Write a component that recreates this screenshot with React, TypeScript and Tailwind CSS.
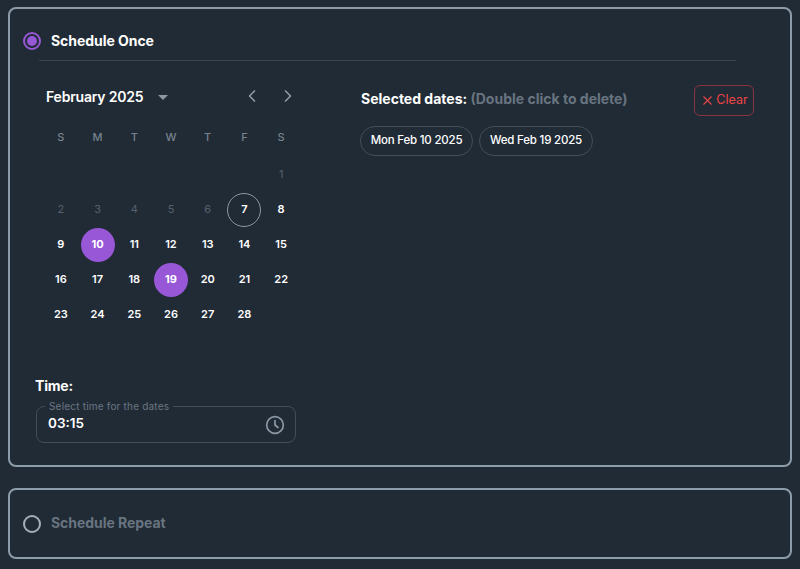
import { ChevronLeft, ChevronRight, X } from "lucide-react";

const weekDays = ["S", "M", "T", "W", "T", "F", "S"];
const leading = [null, null, null, null, null, null, 1, 2, 3, 4, 5, 6];
const current = Array.from({ length: 22 }, (_, i) => i + 7);
const selected = [10, 19];

function Day({ d }: { d: number | null }) {
  if (d === null) return <div className="h-[35px]" />;
  const isMuted = d < 7;
  const isSel = selected.includes(d);
  return (
    <div className="h-[35px] flex items-center justify-center">
      <div
        className={
          "w-[34px] h-[34px] rounded-full flex items-center justify-center " +
          (isMuted
            ? "text-[11px] font-normal text-[#56616d]"
            : isSel
              ? "text-[11px] font-bold text-white bg-[#9757d7]"
              : d === 7
                ? "text-[11px] font-semibold text-white border border-[#8b98a5]"
                : "text-[11px] font-semibold text-white")
        }
      >
        {d}
      </div>
    </div>
  );
}

export default function App() {
  return (
    <div
      className="w-[800px] h-[569px] overflow-hidden bg-[#212b36] pl-2 pr-[8px] pt-[7px] flex flex-col gap-[21px]"
      style={{ fontFamily: '"Inter", "Liberation Sans", sans-serif' }}
    >
      <section className="h-[460px] shrink-0 border-2 border-[#8d9ca9] rounded-lg pl-[13px] flex flex-col">
        <div className="h-[51px] flex items-end shrink-0">
          <div className="flex items-center h-[35px] pb-[3px]">
            <div className="w-[18px] h-[18px] rounded-full border-2 border-[#9757d7] flex items-center justify-center">
              <div className="w-[10px] h-[10px] rounded-full bg-[#9757d7]" />
            </div>
            <span className="ml-[10px] -mt-[2px] text-[14px] font-bold text-white tracking-[-0.05px]">Schedule Once</span>
          </div>
        </div>
        <div className="h-px ml-[16px] w-[697px] bg-[#3a4550] shrink-0" />
        <div className="flex">
          <div className="ml-[13px] w-[267px] shrink-0 flex flex-col">
            <div className="h-[36px] mt-[17px] flex items-center pl-[10px] pr-[5px]">
              <span className="text-[14px] font-semibold text-white tracking-[-0.2px]">February 2025</span>
              <svg className="ml-[15px] mt-[2px]" width="10" height="5" viewBox="0 0 10 5">
                <path d="M0 0h10L5 5z" fill="#8b98a5" />
              </svg>
              <div className="ml-auto flex items-center gap-[16px] text-[#8b98a5]">
                <ChevronLeft size={20} strokeWidth={2} />
                <ChevronRight size={20} strokeWidth={2} />
              </div>
            </div>
            <div className="grid grid-cols-7 w-[257px] ml-[6.5px] mt-[6px] h-[35px] items-center text-center text-[11px] font-medium text-[#76828e] leading-none">
              {weekDays.map((d, i) => (
                <span key={i}>{d}</span>
              ))}
            </div>
            <div className="grid grid-cols-7 w-[257px] ml-[6.5px] mt-[2px]">
              {leading.map((d, i) => (
                <Day key={i} d={d} />
              ))}
              {current.map((d) => (
                <Day key={d} d={d} />
              ))}
            </div>
            <div className="mt-[44px] -ml-[1px] text-[14px] leading-[20px] font-bold text-white tracking-[-0.2px]">Time:</div>
            <div className="relative w-[260px] mt-[10px] h-[37px] border border-[#434e59] rounded-lg flex items-center justify-between pl-[11px] pr-[10px]">
              <span className="absolute -top-[8px] left-[8px] px-[4px] bg-[#212b36] text-[10px] leading-[14px] text-[#6a7682] tracking-[0.2px]">
                Select time for the dates
              </span>
              <span className="text-[13.5px] font-semibold text-white mb-[3px]">03:15</span>
              <svg width="20" height="20" viewBox="0 0 20 20" fill="none" stroke="#8b98a5" strokeWidth="1.7" strokeLinecap="round">
                <circle cx="10" cy="10" r="8.3" />
                <path d="M10 5.5V10l3 2.5" />
              </svg>
            </div>
          </div>
          <div className="flex-1 ml-[57px]">
            <div className="flex items-start justify-between w-[394px] mt-[24px]">
              <div className="ml-[1px] mt-[4px] text-[14px] leading-[20px] font-bold text-white">
                Selected dates: <span className="text-[#68747f]">(Double click to delete)</span>
              </div>
              <button className="h-[31px] w-[60px] border border-[#8a333c] rounded-md flex items-center justify-center gap-[1px] text-[#ef4444] text-[12.5px]">
                <X size={15} strokeWidth={1.75} />
                Clear
              </button>
            </div>
            <div className="flex gap-[6px] mt-[10px]">
              <span className="h-[30px] w-[113px] flex items-center justify-center rounded-full border border-[#434e59] text-[11.5px] font-medium text-white tracking-[-0.2px]">
                Mon Feb 10 2025
              </span>
              <span className="h-[30px] w-[114px] flex items-center justify-center rounded-full border border-[#434e59] text-[11.5px] font-medium text-white tracking-[-0.2px]">
                Wed Feb 19 2025
              </span>
            </div>
          </div>
        </div>
      </section>
      <section className="h-[71px] shrink-0 border-2 border-[#8d9ca9] rounded-lg pl-[13px] flex items-center">
        <div className="w-[18px] h-[18px] rounded-full border-2 border-[#a3afba]" />
        <span className="ml-[10px] -mt-[2px] text-[14px] font-bold text-[#68747f] tracking-[-0.05px]">Schedule Repeat</span>
      </section>
    </div>
  );
}
